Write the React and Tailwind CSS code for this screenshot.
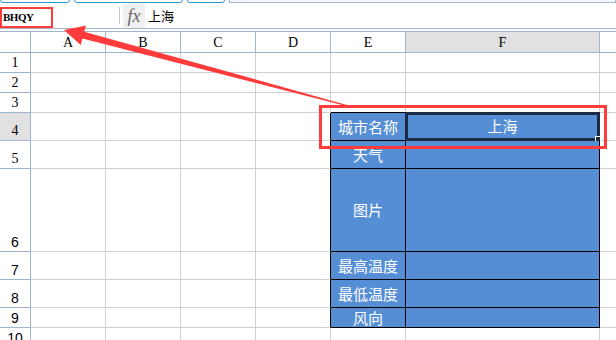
import React from "react";

const rows = [
  { n: 1, h: "h-[20px]", serif: true },
  { n: 2, h: "h-[20px]", serif: true },
  { n: 3, h: "h-[20px]", serif: true },
  { n: 4, h: "h-[28px]", serif: true, label: "城市名称", value: "上海" },
  { n: 5, h: "h-[28px]", serif: true, label: "天气" },
  { n: 6, h: "h-[83px]", label: "图片" },
  { n: 7, h: "h-[28px]", label: "最高温度" },
  { n: 8, h: "h-[28px]", label: "最低温度" },
  { n: 9, h: "h-[20px]", label: "风向" },
  { n: 10, h: "h-[20px]" },
];

const cols = ["A", "B", "C", "D", "E", "F"];

function Toolbar() {
  return (
    <div className="h-[3px] flex items-end gap-[4px] overflow-hidden">
      <div className="w-[70px] h-[6px] -mt-[3px] border border-[#2a9bd6] rounded-b-[3px]"></div>
      <div className="w-[109px] h-[6px] -mt-[3px] border border-[#2a9bd6] rounded-b-[3px]"></div>
      <div className="w-[38px] h-[6px] -mt-[3px] border border-[#2a9bd6] rounded-b-[3px]"></div>
      <div className="flex-1 h-[6px] -mt-[3px] border border-[#a8b8cc] bg-[#f4f6f9]"></div>
    </div>
  );
}

function FormulaBar() {
  return (
    <div className="h-[26px] flex items-stretch border-b border-[#a4b4c8] bg-white">
      <div className="w-[120px] flex items-center pl-[3px] pt-[4px] border-r border-[#c4c4c4] my-[4px]">
        <span className="text-[11px] font-semibold text-black tracking-[-0.5px]" style={{ fontFamily: '"Liberation Serif", serif' }}>BHQY</span>
      </div>
      <div className="w-[22px] ml-[3px] bg-[#f0f0f0] flex items-center justify-center mt-[1px]">
        <span className="italic text-[18px] leading-none text-[#666]" style={{ fontFamily: '"Liberation Serif", serif' }}>fx</span>
      </div>
      <div className="flex items-center pl-[3px] text-[13px] text-black" style={{ fontFamily: '"Noto Sans CJK SC", sans-serif' }}>
        上海
      </div>
    </div>
  );
}

function HeaderRow() {
  return (
    <div className="flex h-[22px] border-t border-[#9eb6ce]">
      <div className="w-[31px] shrink-0 border-r border-b border-[#9eb6ce] bg-white"></div>
      {cols.map((c) => (
        <div
          key={c}
          className={
            "shrink-0 border-r border-b border-[#9eb6ce] flex items-center justify-center text-[14px] text-black " +
            (c === "F" ? "w-[194px] bg-[#e1e1e1]" : "w-[75px] bg-white")
          }
          style={{ fontFamily: '"Liberation Serif", serif' }}
        >
          {c}
        </div>
      ))}
      <div className="flex-1 border-b border-[#9eb6ce] bg-white"></div>
    </div>
  );
}

function Row({ r }) {
  const inTable = r.n >= 4 && r.n <= 9;
  const aboveTable = r.n === 3;
  return (
    <div className={"flex " + r.h}>
      <div
        className={
          "w-[31px] shrink-0 border-r border-b border-[#9eb6ce] flex items-end justify-center text-[14px] leading-[18px] text-black " +
          (r.n === 4 ? "bg-[#e1e1e1]" : "bg-white")
        }
        style={{ fontFamily: r.serif ? '"Liberation Serif", serif' : '"Liberation Sans", sans-serif' }}
      >
        {r.n}
      </div>
      <div className="w-[75px] shrink-0 border-r border-b border-[#d0d0d0]"></div>
      <div className="w-[75px] shrink-0 border-r border-b border-[#d0d0d0]"></div>
      <div className="w-[75px] shrink-0 border-r border-b border-[#d0d0d0]"></div>
      <div className={"w-[75px] shrink-0 border-r border-b border-b-[#d0d0d0] " + (inTable ? "border-r-black" : "border-r-[#d0d0d0]")}></div>
      <div
        className={
          "w-[75px] shrink-0 border-r border-b flex items-center justify-center text-white text-[15px] leading-[18px] whitespace-nowrap overflow-visible " +
          (inTable ? "bg-[#558ed5] border-black" : aboveTable ? "border-r-[#d0d0d0] border-b-black" : "border-[#d0d0d0]")
        }
        style={{ fontFamily: '"Noto Sans CJK SC", sans-serif' }}
      >
        {r.label}
      </div>
      <div
        className={
          "relative w-[194px] shrink-0 border-r border-b flex " +
          (inTable ? "bg-[#558ed5] border-black" : aboveTable ? "border-r-[#d0d0d0] border-b-black" : "border-[#d0d0d0]")
        }
      >
        {r.value && (
          <div
            className="absolute -top-[1px] -left-[1px] -right-[1px] -bottom-[1px] border-[3px] border-[#1c2b44] flex items-center justify-center text-white text-[15px]"
            style={{ fontFamily: '"Noto Sans CJK SC", sans-serif' }}
          >
            {r.value}
            <div className="absolute -right-[4px] -bottom-[4px] w-[6px] h-[6px] bg-[#1c2b44] border border-white"></div>
          </div>
        )}
      </div>
      <div className="flex-1 border-b border-[#d0d0d0]"></div>
    </div>
  );
}

function Annotations() {
  return (
    <svg className="absolute inset-0 pointer-events-none" width="616" height="340" viewBox="0 0 616 340">
      <rect x="1" y="8" width="51" height="19" fill="none" stroke="#ff3b3b" strokeWidth="2" />
      <rect x="320.5" y="106.5" width="285" height="41" fill="none" stroke="#ff3b3b" strokeWidth="3" />
      <polygon
        points="64,30 86,25.5 84.2,31.8 352.2,106.4 351.8,107.4 82.4,38.6 80.7,45"
        fill="#ff3b3b"
      />
    </svg>
  );
}

export default function App() {
  return (
    <div className="relative w-[616px] h-[340px] overflow-hidden bg-white">
      <Toolbar />
      <FormulaBar />
      <div className="h-[2px]"></div>
      <HeaderRow />
      {rows.map((r) => (
        <Row key={r.n} r={r} />
      ))}
      <Annotations />
    </div>
  );
}
